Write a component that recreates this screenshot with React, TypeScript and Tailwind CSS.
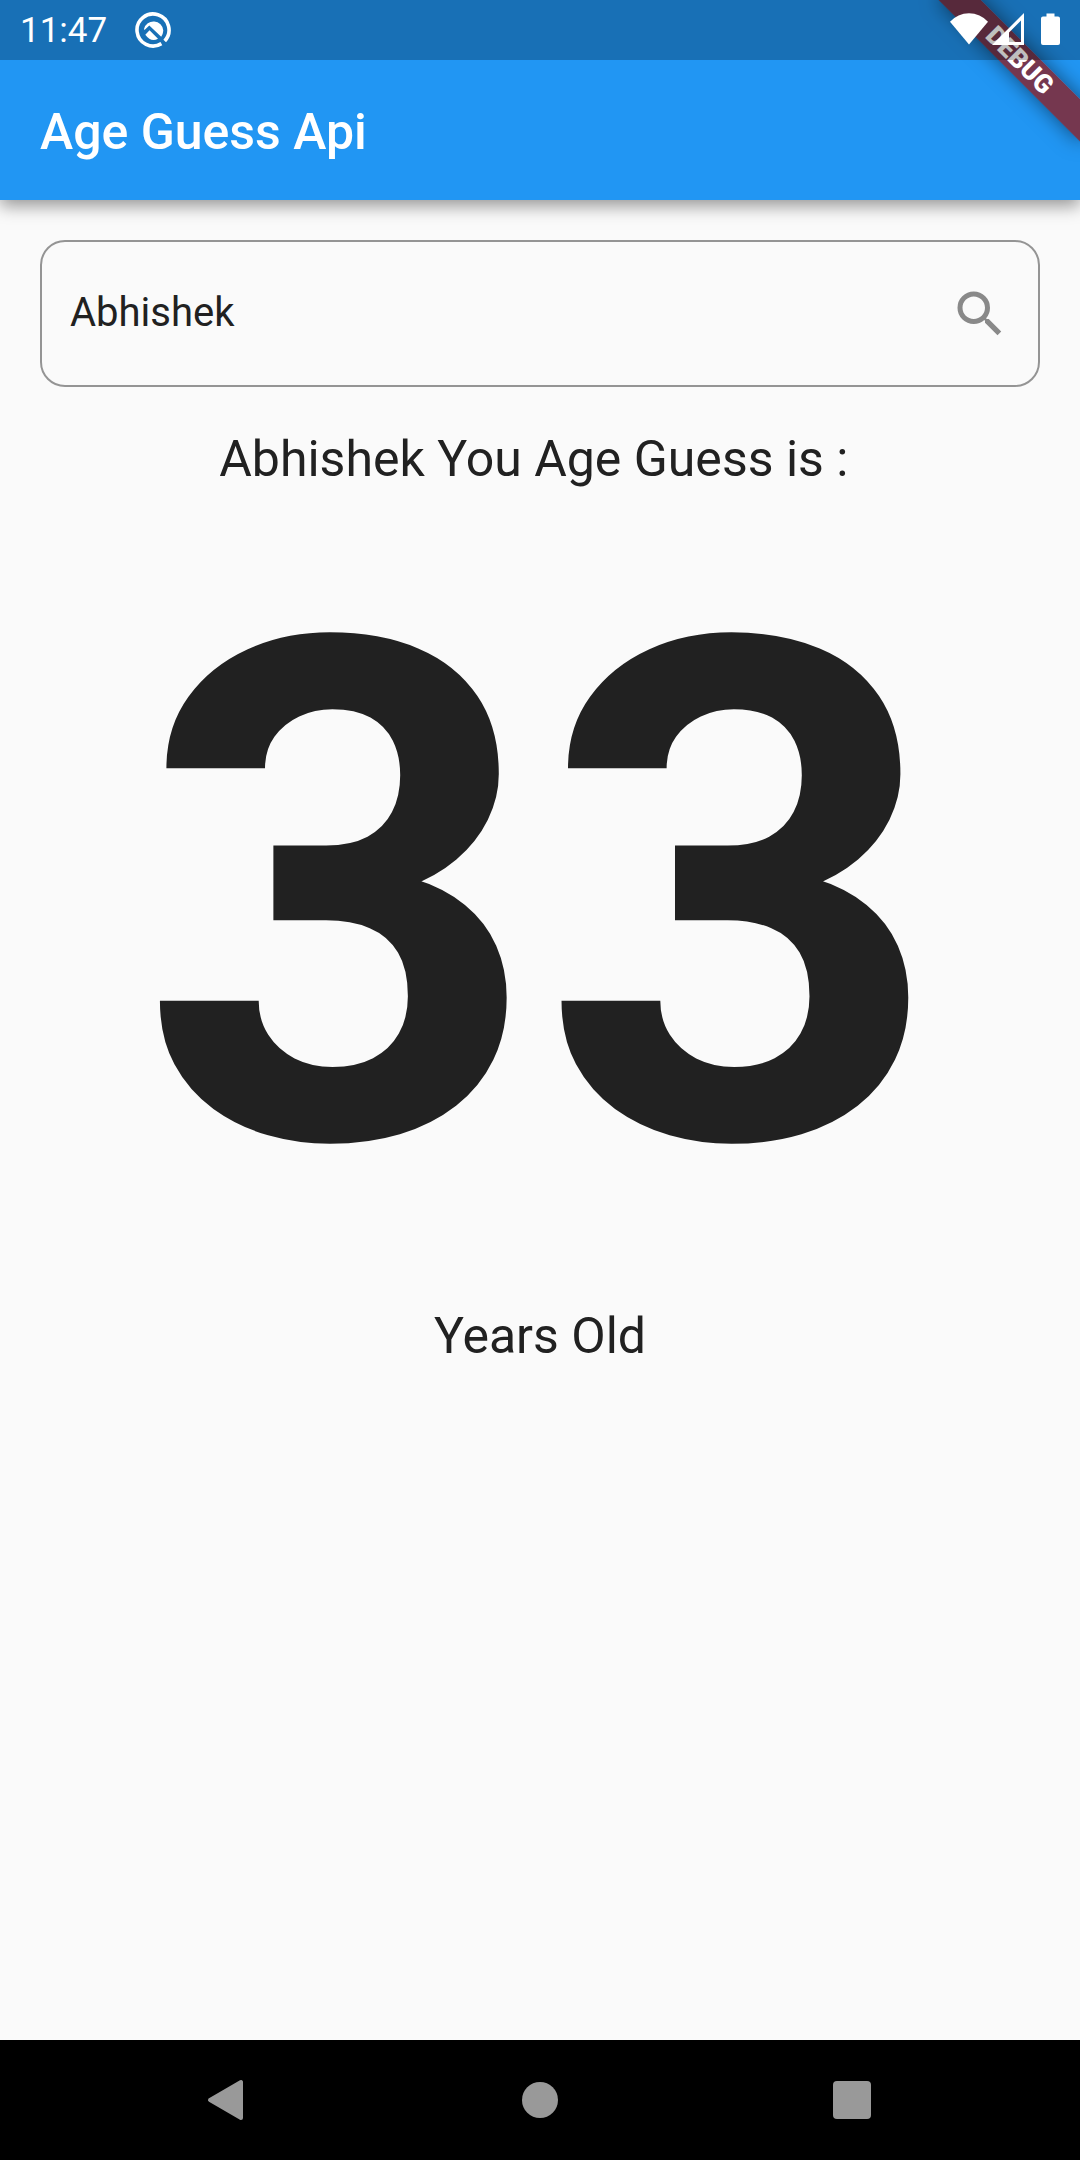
import { useState } from "react";

function StatusBar() {
  return (
    <div className="relative z-10 flex h-[60px] items-center justify-between bg-black/25 px-5 text-white">
      <div className="flex items-center gap-7">
        <time className="pt-0.5 text-[35px] leading-10">11:47</time>
        <svg viewBox="0 0 36 36" className="size-9" fill="none" aria-hidden="true">
          <path d="M26.400 31.600A16 16 0 1 1 29.700 28.900" stroke="currentColor" strokeWidth="3.6" />
          <path d="M9 17A9.800 9.800 0 0 1 28.300 18.500Q28 22.500 26.200 24.800L14.300 13.500L9.500 18Z" fill="currentColor" />
          <path d="M14.500 18.300L23 26.800Q16 30.500 10.300 22.800Z" fill="currentColor" />
        </svg>
      </div>
      <div className="flex items-center pb-0.5" aria-hidden="true">
        <svg viewBox="0 0 38 32" className="mr-1 h-8 w-[38px]" fill="currentColor">
          <path d="M19 31.500L0 8.700A25.700 25.700 0 0 1 38 8.700Z" />
        </svg>
        <svg viewBox="0 0 32 32" className="mr-[17px] size-8" fill="currentColor" fillRule="evenodd">
          <path d="M32 0V32H0ZM29 7.500L17 19.500V29H29Z" />
        </svg>
        <svg viewBox="0 0 19 32" className="h-8 w-[19px]" fill="currentColor">
          <path d="M5.500 0.500H13.500V3.500H17Q19 3.500 19 5.500V30Q19 32 17 32H2Q0 32 0 30V5.500Q0 3.500 2 3.500H5.500Z" />
        </svg>
      </div>
    </div>
  );
}

function DebugRibbon() {
  return (
    <div className="absolute top-[70px] -right-[100px] flex h-[30px] w-[200px] origin-[100px_-70px] rotate-45 items-center justify-center bg-[#8d1c20]/78 text-[26px] leading-none font-black text-white shadow-[0_0_20px_rgba(0,0,0,0.5)]">
      DEBUG
    </div>
  );
}

function NavigationBar() {
  return (
    <nav className="flex h-[120px] items-center justify-around bg-black px-[72px] text-[#999999]">
      <button type="button" aria-label="Back">
        <svg viewBox="0 0 60 60" className="size-[60px]" fill="currentColor" stroke="currentColor" strokeWidth="4" strokeLinejoin="round">
          <path d="M12 30L43 12V48Z" />
        </svg>
      </button>
      <button type="button" aria-label="Home">
        <svg viewBox="0 0 60 60" className="size-[60px]" fill="currentColor">
          <circle cx="30" cy="30" r="18" />
        </svg>
      </button>
      <button type="button" aria-label="Recent apps">
        <svg viewBox="0 0 60 60" className="size-[60px]" fill="currentColor">
          <rect x="11" y="11" width="38" height="38" rx="4" />
        </svg>
      </button>
    </nav>
  );
}

export default function App() {
  const [name, setName] = useState("Abhishek");

  return (
    <div className="flex min-h-screen flex-col bg-[#fafafa] font-[Roboto,sans-serif] text-[#212121]">
      <header className="relative overflow-x-clip bg-[#2196f3] shadow-[0_6px_16px_rgba(0,0,0,0.4)]">
        <DebugRibbon />
        <StatusBar />
        <h1 className="flex h-[140px] items-center px-10 pt-1 text-[50px] font-medium text-white">
          Age Guess Api
        </h1>
      </header>

      <main className="flex flex-1 flex-col items-center p-10">
        <form
          className="flex h-[147px] w-full items-center rounded-[25px] border-2 border-[#949494] px-7"
          onSubmit={(event) => event.preventDefault()}
        >
          <input
            type="text"
            aria-label="Name"
            value={name}
            onChange={(event) => setName(event.target.value)}
            className="min-w-0 flex-1 bg-transparent pb-0.5 text-[40px] leading-[48px] outline-none"
          />
          <button type="submit" aria-label="Search" className="text-[#898989]">
            <svg viewBox="0 0 24 24" className="size-[60px]" fill="currentColor">
              <path d="M15.5 14h-.79l-.28-.27A6.471 6.471 0 0 0 16 9.500 6.500 6.500 0 1 0 9.500 16c1.610 0 3.090-.59 4.230-1.570l.27.28v.79l5 4.990L20.490 19l-4.990-5zm-6 0C7.010 14 5 11.990 5 9.500S7.010 5 9.500 5 14 7.010 14 9.500 11.990 14 9.500 14z" />
            </svg>
          </button>
        </form>
        <p className="mt-[43px] text-[50px] leading-[59px] whitespace-pre">{"Abhishek You Age Guess is : "}</p>
        <p className="text-[700px] leading-[818px] font-bold">33</p>
        <p className="text-[50px] leading-[59px]">Years Old</p>
      </main>

      <NavigationBar />
    </div>
  );
}
